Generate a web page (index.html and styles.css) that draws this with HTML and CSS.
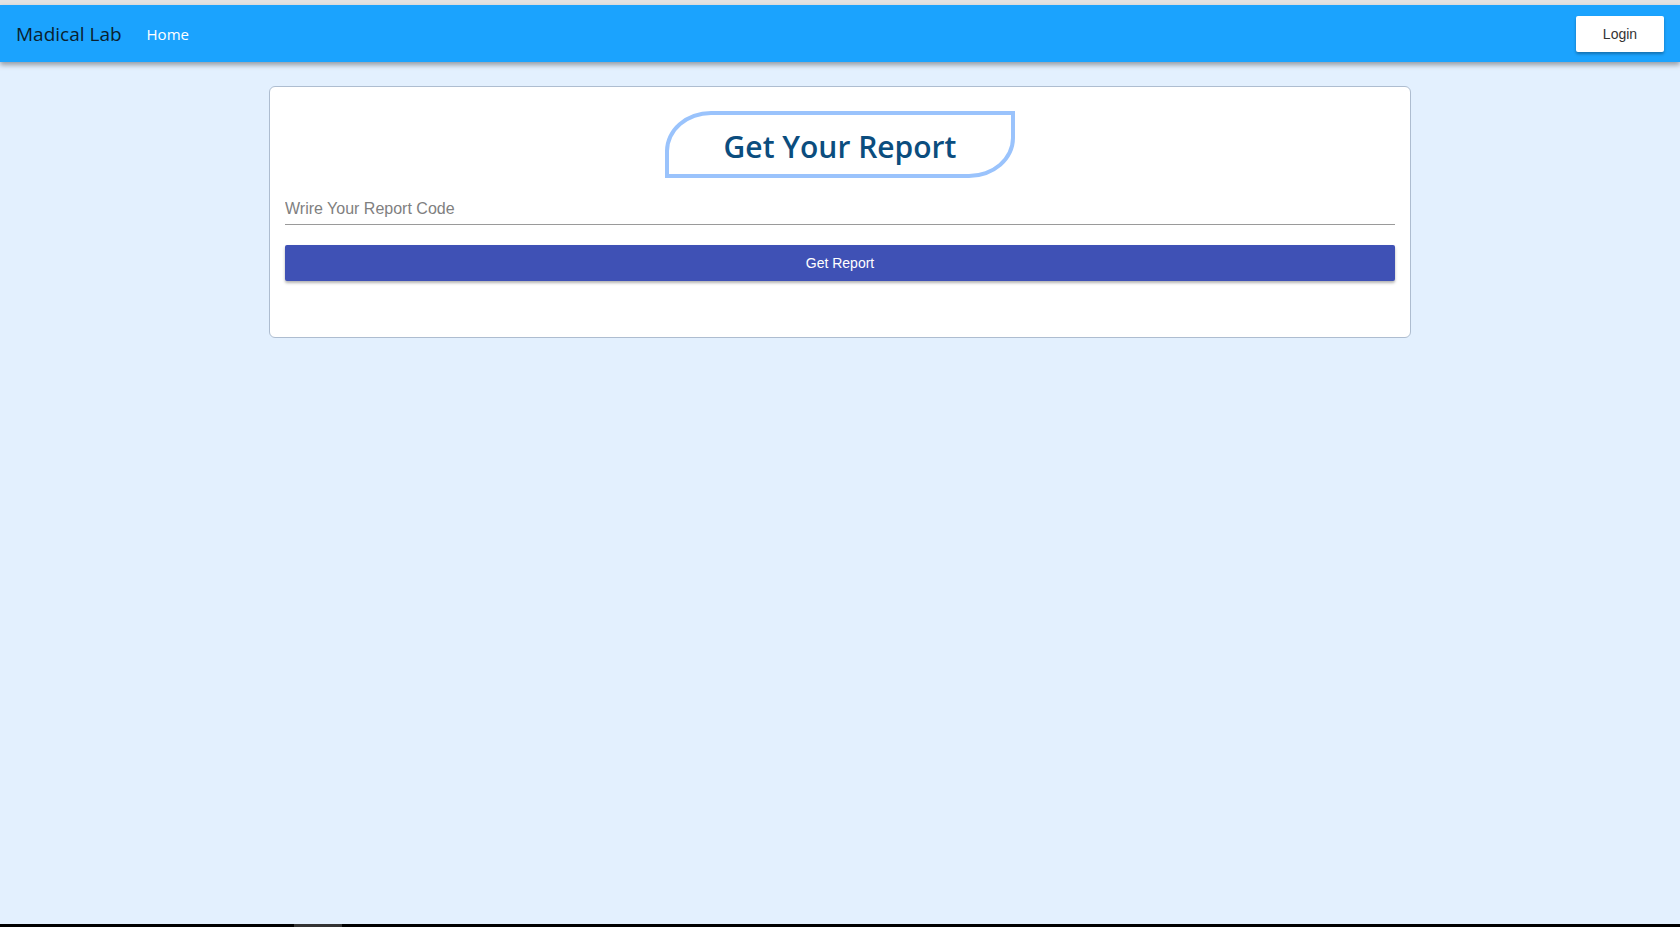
FILE: index.html
```html
<!DOCTYPE html>
<html lang="en">
<head>
<meta charset="utf-8">
<title>Madical Lab</title>
<link rel="stylesheet" href="styles.css">
</head>
<body>
  <div class="topstrip"></div>
  <header class="navbar">
    <a class="brand" href="#">Madical Lab</a>
    <a class="nav-link" href="#">Home</a>
    <span class="spacer"></span>
    <button class="login-btn" type="button">Login</button>
  </header>
  <main class="main">
    <section class="card">
      <div class="title-wrap">
        <h1 class="title">Get Your Report</h1>
      </div>
      <input class="code-input" type="text" placeholder="Wrire Your Report Code">
      <button class="report-btn" type="button">Get Report</button>
    </section>
  </main>
  <div class="bottom-bar"><span class="bottom-seg"></span></div>
</body>
</html>
```

FILE: styles.css
```css
* { box-sizing: border-box; }
html, body { margin: 0; padding: 0; }
body {
  min-height: 927px;
  height: 100vh;
  display: flex;
  flex-direction: column;
  background: #e3f0fe;
  font-family: "Open Sans", "Noto Sans", sans-serif;
  overflow: hidden;
}
.topstrip { height: 5px; background: #e2e2e2; flex: none; }
.navbar {
  flex: none;
  height: 57px;
  background: #1ba3fe;
  display: flex;
  align-items: center;
  padding: 0 16px 0 16px;
  box-shadow: 0 3px 5px rgba(0,0,0,0.35);
  position: relative;
  z-index: 2;
}
.brand {
  color: #0a1f2e;
  text-decoration: none;
  font-size: 19px;
  line-height: 1;
  margin-right: 25px;
  padding-top: 2px;
}
.nav-link {
  color: #ffffff;
  text-decoration: none;
  font-size: 15px;
  line-height: 1;
  padding-top: 2px;
}
.spacer { flex: 1; }
.login-btn {
  width: 88px;
  height: 36px;
  background: #fff;
  border: none;
  border-radius: 2px;
  color: #333;
  font-family: "Liberation Sans", Arial, sans-serif;
  font-size: 14px;
  box-shadow: 0 2px 3px rgba(0,0,0,0.3);
  margin-top: 1px;
}
.main { flex: 1; padding-top: 24px; }
.card {
  width: 1142px;
  margin: 0 auto;
  background: #fff;
  border: 1px solid #aebdd0;
  border-radius: 6px;
  padding: 24px 15px 56px 15px;
  display: flex;
  flex-direction: column;
}
.title-wrap { display: flex; justify-content: center; }
.title {
  margin: 0;
  width: 350px;
  height: 67px;
  border: 4px solid #9ac3fc;
  border-radius: 46px 0 46px 0 / 40px 0 40px 0;
  display: flex;
  align-items: center;
  justify-content: center;
  color: #0b4d7e;
  font-size: 30px;
  font-weight: 600;
  padding-top: 3px;
}
.code-input {
  margin-top: 14px;
  height: 33px;
  border: none;
  border-bottom: 1px solid #9a9a9a;
  background: transparent;
  font-family: "Liberation Sans", Arial, sans-serif;
  font-size: 16px;
  padding: 2px 0 0 0;
  outline: none;
  color: #333;
}
.code-input::placeholder { color: #808080; }
.report-btn {
  margin-top: 20px;
  height: 36px;
  background: #3f51b5;
  border: none;
  border-radius: 2px;
  color: #fff;
  font-family: "Liberation Sans", Arial, sans-serif;
  font-size: 14px;
  box-shadow: 0 2px 3px rgba(0,0,0,0.3);
}
.bottom-bar {
  flex: none;
  height: 3px;
  background: #000;
  display: flex;
}
.bottom-seg { width: 48px; margin-left: 294px; background: #333; }
```
